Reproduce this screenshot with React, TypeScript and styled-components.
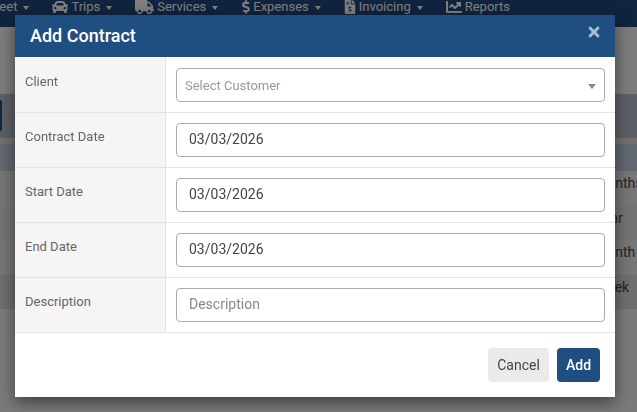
import React, { FC } from 'react';
import styled, { createGlobalStyle } from 'styled-components';
import { FaCar, FaTruck, FaDollarSign, FaFileInvoiceDollar, FaChartLine, FaTimes } from 'react-icons/fa';

const GlobalStyle = createGlobalStyle`
    html, body {
        margin: 0;
        padding: 0;
        height: 100%;
        overflow: hidden;
        background: #f8f8f8;
        font-family: Roboto, "Liberation Sans", sans-serif;
    }
    * { box-sizing: border-box; }
`;

const navItems = [
    { label: 'Fleet', icon: null, width: 0, caret: true },
    { label: 'Trips', icon: <FaCar size={16} />, width: 16, caret: true },
    { label: 'Services', icon: <FaTruck size={19} />, width: 19, caret: true },
    { label: 'Expenses', icon: <FaDollarSign size={14} />, width: 9, caret: true },
    { label: 'Invoicing', icon: <FaFileInvoiceDollar size={14} />, width: 12, caret: true },
    { label: 'Reports', icon: <FaChartLine size={16} />, width: 16, caret: false },
];

const tableRows = ['Months', 'Year', 'Month', 'Week'];

const dateFields = ['Contract Date', 'Start Date', 'End Date'];

const App: FC = () => {
    return (
        <>
            <GlobalStyle />
            <Page>
                <Nav>
                    {navItems.map((item) => (
                        <NavItem key={item.label}>
                            {item.icon && <NavIcon $width={item.width}>{item.icon}</NavIcon>}
                            <span>{item.label}</span>
                            {item.caret && <NavCaret />}
                        </NavItem>
                    ))}
                </Nav>
                <PageTop />
                <Toolbar>
                    <ToolbarButton />
                </Toolbar>
                <Divider />
                <TableHead />
                {tableRows.map((text, i) => (
                    <TableRow key={text} $shade={i}>{text}</TableRow>
                ))}
            </Page>
            <Backdrop>
                <Modal>
                    <Header>
                        <Title>Add Contract</Title>
                        <Close><FaTimes size={16} /></Close>
                    </Header>
                    <Body>
                        <Row>
                            <Label>Client</Label>
                            <Field>
                                <Select>
                                    <span>Select Customer</span>
                                    <SelectCaret />
                                </Select>
                            </Field>
                        </Row>
                        {dateFields.map((name) => (
                            <Row key={name}>
                                <Label>{name}</Label>
                                <Field>
                                    <Input type="text" value="03/03/2026" readOnly />
                                </Field>
                            </Row>
                        ))}
                        <Row>
                            <Label>Description</Label>
                            <Field>
                                <Input type="text" placeholder="Description" />
                            </Field>
                        </Row>
                    </Body>
                    <Footer>
                        <CancelButton>Cancel</CancelButton>
                        <AddButton>Add</AddButton>
                    </Footer>
                </Modal>
            </Backdrop>
        </>
    );
};
export default App;

const Page = styled.div`
    height: 412px;
    overflow: hidden;
    background: #f4f4f4;
`;

const Nav = styled.nav`
    display: flex;
    gap: 23px;
    height: 27px;
    margin-left: -11px;
    background: #20487e;
    color: #fff;
    font-size: 13px;
    white-space: nowrap;
`;

const NavItem = styled.div`
    display: flex;
    align-items: center;
    height: 13px;
    gap: 3px;
`;

const NavIcon = styled.span<{ $width: number }>`
    display: flex;
    flex: none;
    justify-content: center;
    width: ${({ $width }) => $width}px;
    svg { flex: none; }
`;

const NavCaret = styled.i`
    width: 0;
    height: 0;
    margin-left: 3px;
    margin-top: 2px;
    border-left: 3.5px solid transparent;
    border-right: 3.5px solid transparent;
    border-top: 4px solid #fff;
`;

const PageTop = styled.div`
    height: 67px;
    background: #f8f8f8;
`;

const Toolbar = styled.div`
    height: 44px;
    padding-top: 6px;
    background: #b8c0cc;
`;

const ToolbarButton = styled.div`
    width: 2px;
    height: 31px;
    border-radius: 0 3px 3px 0;
    background: #1f4e80;
`;

const Divider = styled.div`
    height: 6px;
    background: #e4e2df;
`;

const TableHead = styled.div`
    height: 27px;
    background: #c5d0e0;
`;

const TableRow = styled.div<{ $shade: number }>`
    height: 34.5px;
    padding: 2px 0 0 595px;
    line-height: 20px;
    font-size: 14px;
    white-space: nowrap;
    color: #404858;
    background: ${({ $shade }) => ($shade === 3 ? '#dedede' : $shade === 1 ? '#e6e6e6' : '#ececec')};
`;

const Backdrop = styled.div`
    position: fixed;
    inset: 0;
    padding: 15px 0 0 15px;
    background: rgba(0, 0, 0, 0.5);
`;

const Modal = styled.div`
    width: 600px;
    height: 382px;
    background: #fff;
    box-shadow: 0 5px 15px rgba(0, 0, 0, 0.5);
`;

const Header = styled.div`
    display: flex;
    align-items: center;
    justify-content: space-between;
    height: 42px;
    padding: 0 15px;
    background: #1f4e80;
`;

const Title = styled.h4`
    margin: 0 0 2px;
    font-size: 18px;
    font-weight: 500;
    color: #fff;
`;

const Close = styled.div`
    display: flex;
    margin: -8px -2px 0 0;
    color: #a8bfd8;
`;

const Body = styled.div`
    border-bottom: 1px solid #e2e2e2;
`;

const Row = styled.div`
    display: flex;
    height: 55px;
    &:not(:first-child) { border-top: 1px solid #e2e2e2; }
`;

const Label = styled.label`
    width: 151px;
    padding: 14px 10px 0;
    line-height: 20px;
    font-size: 13px;
    color: #666;
    background: #f5f5f5;
    border-right: 1px solid #e2e2e2;
    ${Row}:first-child & { padding-top: 15px; }
`;

const Field = styled.div`
    flex: 1;
    padding: 10px 10px 0;
    ${Row}:first-child & { padding-top: 11px; }
`;

const Input = styled.input`
    display: block;
    width: 429px;
    height: 34px;
    padding: 0 12px 2px;
    border: 1px solid #aaa;
    border-radius: 4px;
    outline: none;
    background: #fff;
    font-family: inherit;
    font-size: 14px;
    color: #444;
    &::placeholder { color: #888; opacity: 1; }
`;

const Select = styled.div`
    display: flex;
    align-items: center;
    justify-content: space-between;
    width: 429px;
    height: 34px;
    padding: 0 8px;
    border: 1px solid #aaa;
    border-radius: 4px;
    font-size: 13px;
    color: #999;
`;

const SelectCaret = styled.i`
    width: 0;
    height: 0;
    margin-top: 2px;
    border-left: 4px solid transparent;
    border-right: 4px solid transparent;
    border-top: 5px solid #888;
`;

const Footer = styled.div`
    display: flex;
    justify-content: flex-end;
    gap: 8px;
    padding: 15px;
`;

const CancelButton = styled.button`
    width: 61px;
    height: 34px;
    padding: 0;
    border: none;
    border-radius: 4px;
    background: #eaeaea;
    font-family: inherit;
    font-size: 14px;
    color: #444;
`;

const AddButton = styled(CancelButton)`
    width: 43px;
    background: #1f4e80;
    font-weight: 500;
    color: #fff;
`;
